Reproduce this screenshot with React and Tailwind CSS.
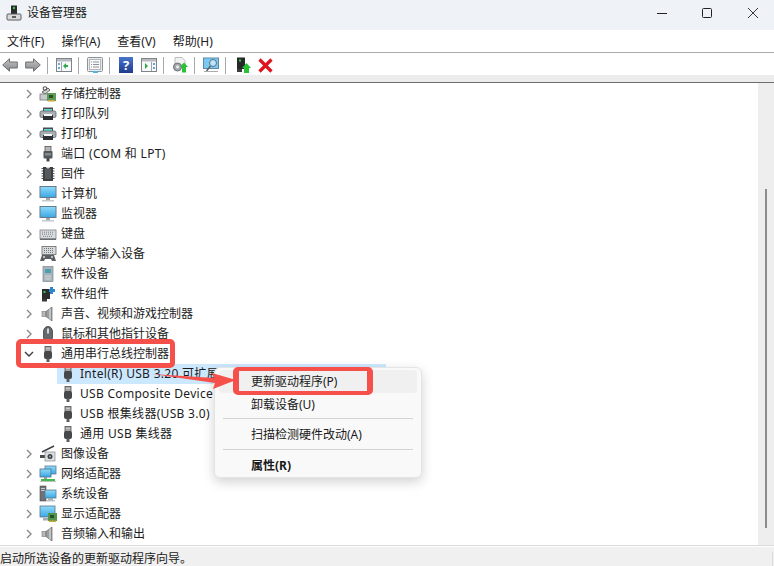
import React from "react";

const FONT = "font-['Noto_Sans','Noto_Sans_CJK_SC',sans-serif]";

const Svg = ({ children, w = 16, h = 16, className = "" }) => (
  <svg width={w} height={h} viewBox={`0 0 ${w} ${h}`} className={`shrink-0 ${className}`}>
    {children}
  </svg>
);

const Usb = () => (
  <Svg>
    <rect x="5" y="0.5" width="6" height="5" fill="#a4a4a4" stroke="#555" strokeWidth="0.8" />
    <rect x="4" y="5" width="8" height="8" rx="2" fill="#46484a" />
    <rect x="6.5" y="12.5" width="3" height="3.5" fill="#5c5f61" />
    <rect x="6.5" y="2" width="1" height="1" fill="#eee" />
    <rect x="8.5" y="2" width="1" height="1" fill="#eee" />
  </Svg>
);

const Defs = () => (
  <svg width="0" height="0" className="absolute">
    <defs>
      <linearGradient id="scr" x1="0" y1="0" x2="0" y2="1">
        <stop offset="0" stopColor="#8fdcfb" />
        <stop offset="1" stopColor="#3aa6e4" />
      </linearGradient>
      <linearGradient id="arr" x1="0" y1="0" x2="0" y2="1">
        <stop offset="0" stopColor="#c4c6c8" />
        <stop offset="1" stopColor="#85878a" />
      </linearGradient>
    </defs>
  </svg>
);

const Monitor = () => (
  <Svg w={18} h={18}>
    <rect x="1" y="1.5" width="16" height="11" fill="url(#scr)" stroke="#6a7a86" strokeWidth="1" />
    <rect x="7" y="13" width="4" height="2" fill="#a0a8ae" />
    <rect x="3" y="15" width="12" height="1.5" fill="#c4cace" />
  </Svg>
);

const Printer = () => (
  <Svg w={18} h={16}>
    <rect x="4" y="1.5" width="10" height="3.5" fill="#4a4e52" />
    <rect x="5" y="3" width="8" height="2" fill="#5fd6cc" />
    <rect x="1" y="5" width="16" height="6.5" rx="1.5" fill="#a9aeb2" stroke="#60666a" strokeWidth="0.8" />
    <rect x="4" y="9" width="10" height="5" fill="#2f3234" />
    <rect x="5" y="8" width="8" height="2" fill="#f7f7f7" />
  </Svg>
);

const Storage = () => (
  <Svg w={18} h={18}>
    <path d="M3 7L9 3L11 5L6 9Z" fill="#d4d6d8" stroke="#555" strokeWidth="0.9" />
    <circle cx="6" cy="3.5" r="1.8" fill="none" stroke="#555" strokeWidth="1.1" />
    <rect x="1" y="9" width="9" height="6" fill="#c9cccf" stroke="#777" strokeWidth="0.8" />
    <rect x="8" y="8" width="9" height="8" fill="#5e9a58" />
    <rect x="10" y="10" width="4" height="3" fill="#2c4f2b" />
    <rect x="9" y="15" width="7" height="1.5" fill="#c8a83c" />
  </Svg>
);

const Port = () => (
  <Svg>
    <rect x="5" y="0.5" width="6" height="5" fill="#b5b8ba" stroke="#555" strokeWidth="0.8" />
    <rect x="3.5" y="5" width="9" height="7.5" rx="1" fill="#54585a" />
    <rect x="5" y="7" width="6" height="2.5" fill="#858a8c" />
    <rect x="6.5" y="12" width="3" height="3.5" fill="#44484a" />
  </Svg>
);

const Chip = () => (
  <Svg>
    <rect x="3" y="1" width="10" height="14" fill="#3d3f41" />
    <path d="M1.5 2.5H3M1.5 5H3M1.5 7.5H3M1.5 10H3M1.5 12.5H3M13 2.5H14.5M13 5H14.5M13 7.5H14.5M13 10H14.5M13 12.5H14.5" stroke="#555" strokeWidth="1" />
    <rect x="5" y="3" width="6" height="10" fill="#56595b" />
    <path d="M6 1a2 1.5 0 0 0 4 0" fill="#ddd" />
  </Svg>
);

const Keyboard = () => (
  <Svg w={18} h={16}>
    <rect x="1" y="4" width="16" height="9" fill="#d9dcdf" stroke="#7c8084" strokeWidth="0.8" />
    <path d="M3 6.2H15M3 8.2H15M4 10.4H14" stroke="#7d8186" strokeWidth="1" strokeDasharray="1 1" />
    <rect x="1" y="12.5" width="16" height="1.5" fill="#686c70" />
  </Svg>
);

const Hid = () => (
  <Svg w={18} h={18}>
    <rect x="3" y="1.5" width="14" height="8" fill="#d8dbde" stroke="#666" strokeWidth="0.8" />
    <path d="M5 3.5H15M5 5.5H15M5 7.5H15" stroke="#777" strokeWidth="1" strokeDasharray="1 1" />
    <path d="M3 10H15L17 16H13L12 14H6L5 16H1Z" fill="#5a5e62" />
    <circle cx="5" cy="12" r="1" fill="#ddd" />
    <circle cx="13" cy="12" r="1" fill="#ddd" />
  </Svg>
);

const Tower = () => (
  <Svg>
    <rect x="3" y="0.5" width="10" height="15" fill="#a9b3ba" stroke="#7e8890" strokeWidth="0.7" />
    <rect x="5" y="3" width="6" height="4" fill="#4a9fb0" />
    <rect x="5" y="9" width="6" height="5" fill="#bcc4ca" />
  </Svg>
);

const Component = () => (
  <Svg w={18} h={16}>
    <rect x="3" y="3" width="8" height="10" fill="#2b2c2e" />
    <rect x="4.5" y="5" width="2" height="2" fill="#35c94a" />
    <rect x="3" y="13" width="5" height="2.5" fill="#38393b" />
    <path d="M11 1H14V3H16V6H14V8H11V6H10V3H11Z" fill="#2f86d0" />
  </Svg>
);

const Speaker = () => (
  <Svg>
    <rect x="2" y="5.5" width="4" height="5" fill="#b7bbbe" stroke="#777" strokeWidth="0.6" />
    <path d="M6 5.5L12 1V15L6 10.5Z" fill="#9b9fa2" stroke="#666" strokeWidth="0.7" />
    <path d="M10 2.5V13.5" stroke="#e6e6e6" strokeWidth="1" />
  </Svg>
);

const Mouse = () => (
  <Svg>
    <path d="M8 0.5C5 0.5 3.5 3 3.5 6V11C3.5 14 5.5 15.5 8 15.5S12.5 14 12.5 11V6C12.5 3 11 0.5 8 0.5Z" fill="#66696c" stroke="#3e4143" strokeWidth="0.8" />
    <rect x="7" y="2.5" width="2" height="5" fill="#d4d6d8" />
  </Svg>
);

const Camera = () => (
  <Svg w={18} h={18}>
    <path d="M3 7L15 1" stroke="#3d3f41" strokeWidth="1.5" />
    <rect x="1" y="10" width="5" height="3" fill="#4a4c4e" />
    <rect x="6" y="7" width="10" height="9" fill="#dcdfe1" stroke="#85898c" strokeWidth="0.7" />
    <circle cx="11" cy="11.5" r="2.5" fill="#3d3f41" />
    <circle cx="11" cy="11.5" r="1" fill="#aab0b4" />
  </Svg>
);

const Network = () => (
  <Svg w={18} h={18}>
    <rect x="6" y="1" width="11" height="8" fill="url(#scr)" stroke="#5c7c96" strokeWidth="0.8" />
    <rect x="1" y="4" width="11" height="8" fill="url(#scr)" stroke="#4e6e88" strokeWidth="0.8" />
    <rect x="5" y="12" width="3" height="2" fill="#8c9aa2" />
    <rect x="2" y="14" width="14" height="2" fill="#44b84c" />
    <rect x="1" y="16" width="16" height="1" fill="#bcc3c7" />
  </Svg>
);

const SystemDev = () => (
  <Svg w={18} h={18}>
    <rect x="1" y="1" width="6" height="15" fill="#6e7175" stroke="#4a4d50" strokeWidth="0.6" />
    <rect x="2" y="3" width="4" height="1" fill="#c8cacc" />
    <rect x="2" y="5" width="4" height="1" fill="#c8cacc" />
    <rect x="6" y="5" width="11" height="8" fill="url(#scr)" stroke="#5e7a8e" strokeWidth="0.8" />
    <rect x="9" y="13" width="5" height="2" fill="#a4acb2" />
    <rect x="7" y="15" width="9" height="1.5" fill="#bcc3c7" />
  </Svg>
);

const Display = () => (
  <Svg w={18} h={18}>
    <rect x="1" y="1" width="15" height="11" fill="url(#scr)" stroke="#56748a" strokeWidth="0.8" />
    <rect x="4" y="13" width="7" height="2.5" fill="#a4acb2" />
    <rect x="9" y="8" width="9" height="8" fill="#52934e" />
    <rect x="11" y="10" width="4" height="3" fill="#2c4f2b" />
    <rect x="10" y="15.5" width="7" height="1.5" fill="#c8a83c" />
  </Svg>
);

const Chevron = ({ open }) => (
  <svg width="10" height="10" viewBox="0 0 10 10" className="shrink-0">
    {open ? (
      <path d="M1 3L5 7L9 3" fill="none" stroke="#3a3a3a" strokeWidth="1.4" />
    ) : (
      <path d="M3 1L7 5L3 9" fill="none" stroke="#8a8a8a" strokeWidth="1.4" />
    )}
  </svg>
);

const rowsTop = [
  [Storage, "存储控制器"],
  [Printer, "打印队列"],
  [Printer, "打印机"],
  [Port, "端口 (COM 和 LPT)", true],
  [Chip, "固件"],
  [Monitor, "计算机"],
  [Monitor, "监视器"],
  [Keyboard, "键盘"],
  [Hid, "人体学输入设备"],
  [Tower, "软件设备"],
  [Component, "软件组件"],
  [Speaker, "声音、视频和游戏控制器"],
  [Mouse, "鼠标和其他指针设备"],
];

const rowsBottom = [
  [Camera, "图像设备"],
  [Network, "网络适配器"],
  [SystemDev, "系统设备"],
  [Display, "显示适配器"],
  [Speaker, "音频输入和输出"],
];

const Row = ({ Icon, label, open, latin }) => (
  <div className="flex h-5 items-center pl-[24px]">
    <span className="flex w-[10px] justify-center"><Chevron open={open} /></span>
    <span className="flex w-[27px] justify-center"><Icon /></span>
    <span className={`whitespace-pre text-[12px] text-[#1c1c1c] ${latin ? "tracking-[0.3px]" : ""}`}>{label}</span>
  </div>
);

const Child = ({ label, selected }) => (
  <div className={`ml-[57px] flex h-5 w-[329px] items-center ${selected ? "bg-[#cce8ff]" : ""}`}>
    <span className="flex w-[21px] justify-center"><Usb /></span>
    <span className="ml-[2px] whitespace-pre text-[12px] tracking-[0.3px] text-[#1c1c1c]">{label}</span>
  </div>
);

const Sep = ({ className = "" }) => <div className={`h-[17px] w-px shrink-0 bg-[#a8a8a8] ${className}`} />;

const ArrowIcon = ({ flip, className = "" }) => (
  <svg width="16" height="14" viewBox="0 0 16 14" className={`shrink-0 ${flip ? "-scale-x-100" : ""} ${className}`}>
    <path d="M0.7 7L7.5 0.8V4H15.3V10H7.5V13.2Z" fill="url(#arr)" stroke="#6c6e70" strokeWidth="1" />
  </svg>
);

const WinIcon = ({ children, className = "" }) => (
  <svg width="16" height="14" viewBox="0 0 16 14" className={`shrink-0 ${className}`}>
    <rect x="0.5" y="0.5" width="15" height="13" fill="#f8f9fa" stroke="#808488" />
    <rect x="1" y="1" width="14" height="2.5" fill="#b8bcc0" />
    {children}
  </svg>
);

const Toolbar = () => (
  <div className="flex h-[22px] items-center bg-white pt-[2px]">
    <ArrowIcon className="ml-[2px]" />
    <ArrowIcon flip className="ml-[7px]" />
    <Sep className="ml-[6px]" />
    <WinIcon className="ml-[8px]">
      <path d="M5.5 4V13" stroke="#a0a4a8" />
      <rect x="2" y="5" width="2" height="2" fill="#5fa8e0" />
      <rect x="2" y="9" width="2" height="2" fill="#5fa8e0" />
      <path d="M10 5V11L7 8Z" fill="#2fa84a" />
      <rect x="10" y="7" width="2" height="2" fill="#2fa84a" />
    </WinIcon>
    <Sep className="ml-[6px]" />
    <svg width="16" height="16" viewBox="0 0 16 16" className="ml-[8px] shrink-0">
      <rect x="0.5" y="0.5" width="15" height="14" rx="1" fill="#e9ecee" stroke="#8e9296" />
      <rect x="2.5" y="2.5" width="11" height="10" fill="#fafafa" stroke="#b4b8bc" />
      <path d="M6 5H12M6 7.5H12M6 10H12M4 5H5M4 7.5H5M4 10H5" stroke="#8d9195" />
      <rect x="6" y="14" width="5" height="2" fill="#4fb4e8" />
    </svg>
    <Sep className="ml-[6px]" />
    <span className="ml-[9px] flex h-[16px] w-[14px] shrink-0 items-center justify-center bg-[linear-gradient(#4a74cc,#1f3c8e)] text-[13px] font-bold leading-none text-white">?</span>
    <WinIcon className="ml-[8px]">
      <path d="M10.5 4V13" stroke="#a0a4a8" />
      <rect x="12" y="5" width="2" height="2" fill="#5fa8e0" />
      <rect x="12" y="9" width="2" height="2" fill="#5fa8e0" />
      <path d="M4 5V11L7 8Z" fill="#2fa84a" />
    </WinIcon>
    <Sep className="ml-[6px]" />
    <svg width="16" height="16" viewBox="0 0 16 16" className="ml-[8px] shrink-0">
      <path d="M3 0.5H10L13 3.5V8H3Z" fill="#f2f2f2" stroke="#b8bcc0" />
      <circle cx="5.5" cy="10" r="4" fill="#a4a8ac" stroke="#6e7276" />
      <circle cx="5.5" cy="10" r="1.4" fill="#f2f2f2" />
      <path d="M12 5.5L16 10H14V15.5H10V10H8Z" fill="#28c234" />
    </svg>
    <Sep className="ml-[6px]" />
    <svg width="16" height="16" viewBox="0 0 16 16" className="ml-[8px] shrink-0">
      <rect x="0.5" y="1" width="15" height="10.5" fill="#79c9f2" stroke="#5e8aa8" />
      <circle cx="10" cy="6" r="3.5" fill="#bfe6f8" stroke="#4e7488" />
      <path d="M7.5 9L3.5 14" stroke="#5e6266" strokeWidth="1.5" />
      <path d="M1 14.5H15" stroke="#a8acb0" />
    </svg>
    <Sep className="ml-[6px]" />
    <svg width="15" height="16" viewBox="0 0 15 16" className="ml-[10px] shrink-0">
      <rect x="1" y="0.5" width="8" height="11.5" fill="#27282a" />
      <rect x="3" y="2.5" width="2" height="2" fill="#35c94a" />
      <rect x="1" y="12" width="5" height="3" fill="#3c3d3f" />
      <path d="M10.5 6L15 11H13V16H8V11H6Z" fill="#28c234" />
    </svg>
    <svg width="15" height="15" viewBox="0 0 15 15" className="ml-[7px] shrink-0">
      <path d="M1.5 1.5L13.5 13.5M13.5 1.5L1.5 13.5" stroke="#e0141c" strokeWidth="3.2" />
    </svg>
  </div>
);

const MenuItem = ({ children, highlight, bold }) => (
  <div className={`mx-[4px] flex h-[23px] items-center rounded-[4px] pl-[32px] text-[12px] text-[#1a1a1a] ${highlight ? "bg-[#f0f0f0]" : ""} ${bold ? "font-bold" : ""}`}>
    {children}
  </div>
);

export default function App() {
  return (
    <div className={`relative flex h-[566px] w-[774px] flex-col overflow-hidden bg-white ${FONT}`}>
      <Defs />
      {/* Title bar */}
      <div className="flex h-[30px] items-center justify-between bg-[#eff3f7] pb-[5px]">
        <div className="flex items-center pl-[6px]">
          <svg width="16" height="16" viewBox="0 0 16 16">
            <rect x="5" y="0.5" width="6" height="9" fill="#2b2c2e" />
            <rect x="7" y="2" width="2" height="2" fill="#35c94a" />
            <rect x="1" y="9" width="14" height="6" rx="1" fill="#d9dadb" stroke="#5b5d5f" />
            <rect x="6" y="11" width="4" height="2" fill="#5b5d5f" />
          </svg>
          <span className="ml-[5px] text-[12px] text-[#1b1b1b]">设备管理器</span>
        </div>
        <div className="flex items-center pr-[15px]">
          <svg width="12" height="12" viewBox="0 0 12 12" className="mr-[33px]">
            <path d="M1 6.5H11" stroke="#222" strokeWidth="1" />
          </svg>
          <svg width="12" height="12" viewBox="0 0 12 12" className="mr-[34px]">
            <rect x="1.5" y="1.5" width="9" height="9" rx="1" fill="none" stroke="#222" strokeWidth="1" />
          </svg>
          <svg width="12" height="12" viewBox="0 0 12 12">
            <path d="M1 1L11 11M11 1L1 11" stroke="#222" strokeWidth="0.9" />
          </svg>
        </div>
      </div>

      {/* Menu bar */}
      <div className="flex h-[23px] items-center gap-[17px] border-b border-[#ababab] bg-white pl-[7px] pt-[2px] text-[12px] text-[#1b1b1b]">
        <span>文件(F)</span>
        <span>操作(A)</span>
        <span>查看(V)</span>
        <span>帮助(H)</span>
      </div>

      <Toolbar />

      <div className="h-[7px] bg-[#ececec]" />
      <div className="h-px bg-[#6d6d6d]" />

      {/* Tree + scrollbar */}
      <div className="flex min-h-0 flex-1">
        <div className="min-w-0 flex-1 overflow-hidden bg-white pt-px">
          {rowsTop.map(([I, l, latin]) => <Row key={l} Icon={I} label={l} latin={latin} />)}
          <Row Icon={Usb} label="通用串行总线控制器" open />
          <Child label="Intel(R) USB 3.20 可扩展" selected />
          <Child label="USB Composite Device" />
          <Child label="USB 根集线器(USB 3.0)" />
          <Child label="通用 USB 集线器" />
          {rowsBottom.map(([I, l]) => <Row key={l} Icon={I} label={l} />)}
        </div>
        <div className="flex w-[16px] justify-center bg-[#eeeeee] pt-[106px]">
          <div className="h-[339px] w-[2px] bg-[#8c8c8c]" />
        </div>
      </div>

      {/* Status bar */}
      <div className="h-px bg-[#dadada]" />
      <div className="mt-px flex h-[19px] items-center bg-[#f0f0f0] pt-[5px] text-[12px] text-[#1b1b1b]">
        启动所选设备的更新驱动程序向导。
        <div className="ml-auto mr-px h-[14px] w-px bg-[#dcdcdc]" />
      </div>

      {/* Context menu */}
      <div className="absolute left-[214px] top-[367px] w-[208px] rounded-[6px] border border-[#e4e4e4] bg-[#f9f9f9] pt-[2px] shadow-[0_4px_12px_rgba(0,0,0,0.18)]">
        <MenuItem highlight>更新驱动程序(P)</MenuItem>
        <MenuItem>卸载设备(U)</MenuItem>
        <div className="mx-[8px] mb-[4px] mt-[2px] h-px bg-[#d4d4d4]" />
        <MenuItem>扫描检测硬件改动(A)</MenuItem>
        <div className="mx-[8px] mb-[4px] mt-[3px] h-px bg-[#d4d4d4]" />
        <MenuItem bold>属性(R)</MenuItem>
      </div>

      {/* Annotations */}
      <div className="absolute left-[16px] top-[339px] h-[29px] w-[159px] rounded-[5px] border-[5px] border-[#f5504a]" />
      <div className="absolute left-[233px] top-[367px] h-[28px] w-[140px] rounded-[5px] border-x-[6px] border-y-[4px] border-[#f5504a]" />
      <svg className="absolute left-[150px] top-[368px]" width="90" height="24" viewBox="0 0 90 24">
        <path d="M2 6L64 10L62 5L86 12L63 21L65 15Z" fill="#f5504a" />
      </svg>
    </div>
  );
}
